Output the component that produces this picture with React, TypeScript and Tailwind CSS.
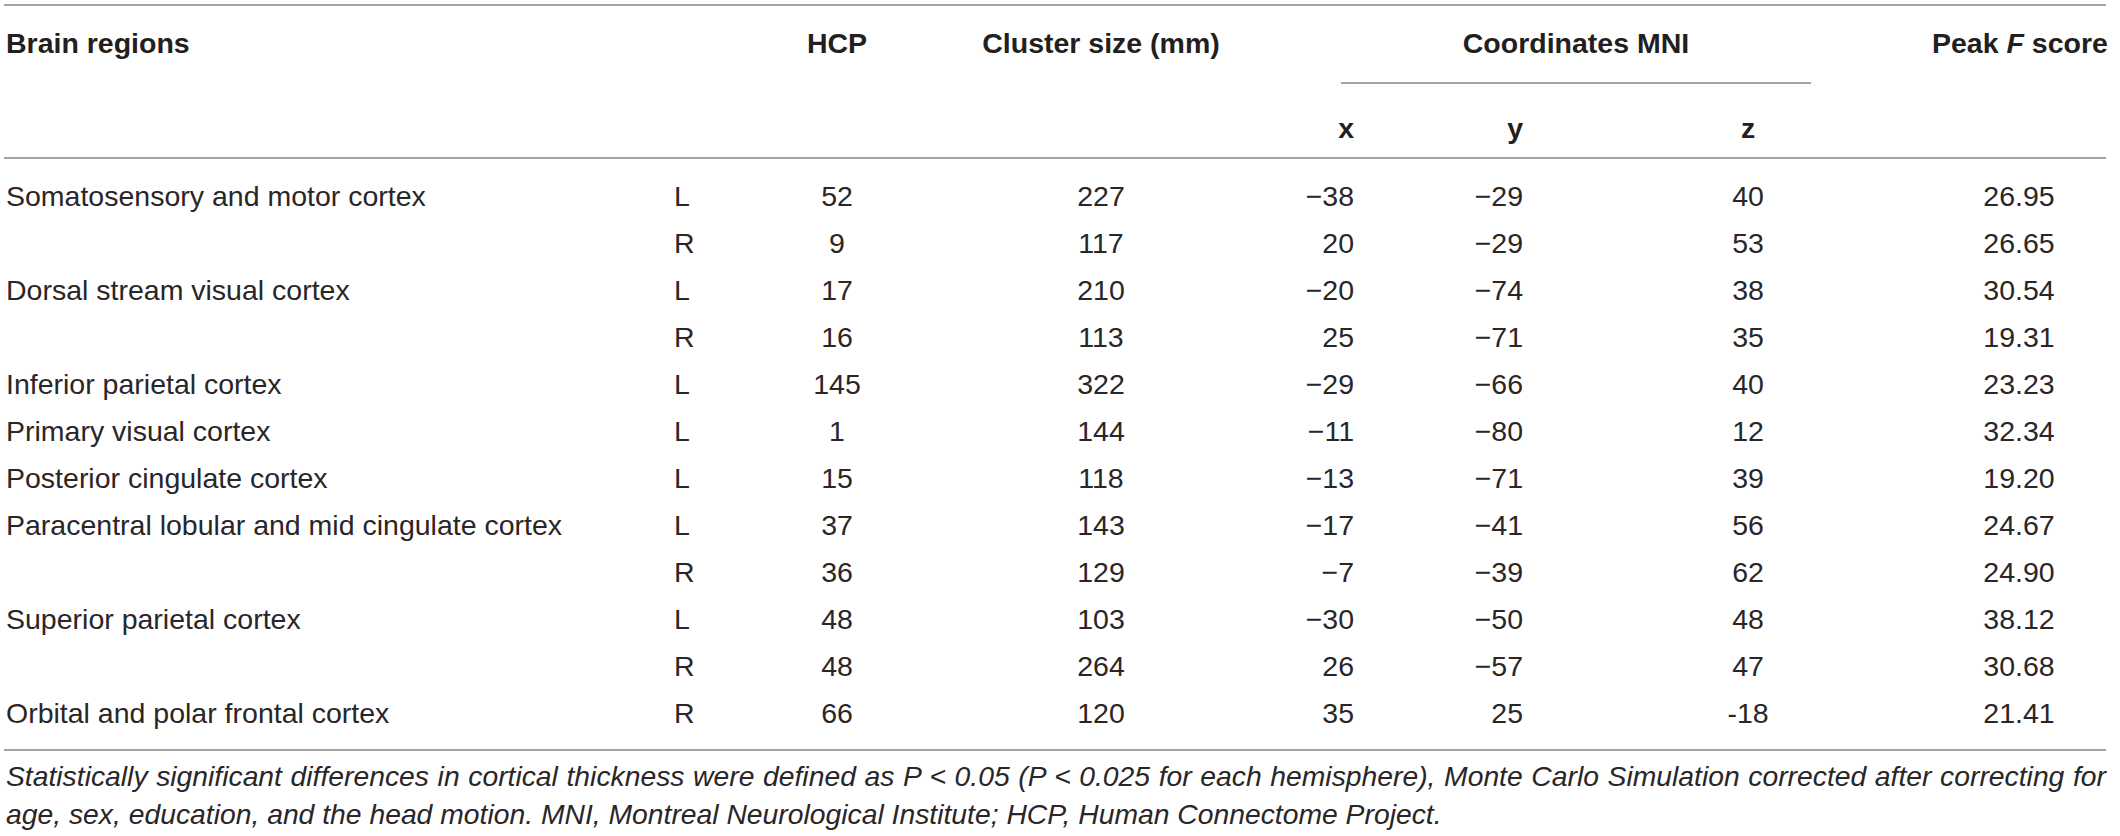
import React from "react";

const rows: string[][] = [
  ["Somatosensory and motor cortex", "L", "52", "227", "\u221238", "\u221229", "40", "26.95"],
  ["", "R", "9", "117", "20", "\u221229", "53", "26.65"],
  ["Dorsal stream visual cortex", "L", "17", "210", "\u221220", "\u221274", "38", "30.54"],
  ["", "R", "16", "113", "25", "\u221271", "35", "19.31"],
  ["Inferior parietal cortex", "L", "145", "322", "\u221229", "\u221266", "40", "23.23"],
  ["Primary visual cortex", "L", "1", "144", "\u221211", "\u221280", "12", "32.34"],
  ["Posterior cingulate cortex", "L", "15", "118", "\u221213", "\u221271", "39", "19.20"],
  ["Paracentral lobular and mid cingulate cortex", "L", "37", "143", "\u221217", "\u221241", "56", "24.67"],
  ["", "R", "36", "129", "\u22127", "\u221239", "62", "24.90"],
  ["Superior parietal cortex", "L", "48", "103", "\u221230", "\u221250", "48", "38.12"],
  ["", "R", "48", "264", "26", "\u221257", "47", "30.68"],
  ["Orbital and polar frontal cortex", "R", "66", "120", "35", "25", "-18", "21.41"],
];

const grid = "grid grid-cols-[666px_90px_154px_374px_72px_170px_402px_174px]";
const font = "'Liberation Sans', Arial, sans-serif";

export default function App() {
  return (
    <div
      className="w-[2120px] h-[836px] bg-white pt-[4px] pl-[4px] text-[#2a2627] overflow-hidden"
      style={{ fontFamily: font }}
    >
      <div className="w-[2102px] border-t-2 border-[#a3a3a3]">
        {/* header row A */}
        <div className={`${grid} font-bold text-[28.5px] leading-[34px] text-[#231f20]`}>
          <div className="pt-[20px] pl-[2px] whitespace-nowrap">Brain regions</div>
          <div />
          <div className="pt-[20px] text-center">HCP</div>
          <div className="pt-[20px] text-center whitespace-nowrap">Cluster size (mm)</div>
          <div className="col-span-3 pt-[20px]">
            <div className="ml-[53px] mr-[121px] pb-[22px] border-b-2 border-[#a3a3a3] text-center whitespace-nowrap">
              Coordinates MNI
            </div>
          </div>
          <div className="pt-[20px] text-right whitespace-nowrap">
            Peak <span className="italic">F</span> score
          </div>
        </div>
        {/* header row B */}
        <div
          className={`${grid} font-bold text-[28.5px] leading-[34px] text-[#231f20] pt-[27px] pb-[12px] border-b-2 border-[#a3a3a3]`}
        >
          <div />
          <div />
          <div />
          <div />
          <div className="text-right pr-[6px]">x</div>
          <div className="text-right pr-[7px]">y</div>
          <div className="text-center pl-[34px]">z</div>
          <div />
        </div>
        {/* body */}
        <div className="pt-[13px] pb-[13px] border-b-2 border-[#a3a3a3] text-[28.5px] font-normal">
          {rows.map((r, i) => (
            <div key={i} className={`${grid} h-[47px] items-center leading-[34px]`}>
              <div className="pl-[2px] whitespace-nowrap">{r[0]}</div>
              <div className="pl-[4px]">{r[1]}</div>
              <div className="text-center">{r[2]}</div>
              <div className="text-center">{r[3]}</div>
              <div className="text-right pr-[6px]">{r[4]}</div>
              <div className="text-right pr-[7px]">{r[5]}</div>
              <div className="text-center pl-[34px]">{r[6]}</div>
              <div className="text-center">{r[7]}</div>
            </div>
          ))}
        </div>
        {/* footnote */}
        <div className="pt-[6px] pl-[2px] italic text-[28.3px] leading-[38px]">
          <div className="whitespace-nowrap text-justify [text-align-last:justify]">
            Statistically significant differences in cortical thickness were defined as P &lt; 0.05 (P &lt; 0.025 for each hemisphere), Monte Carlo Simulation corrected after correcting for
          </div>
          <div className="whitespace-nowrap">
            age, sex, education, and the head motion. MNI, Montreal Neurological Institute; HCP, Human Connectome Project.
          </div>
        </div>
      </div>
    </div>
  );
}
